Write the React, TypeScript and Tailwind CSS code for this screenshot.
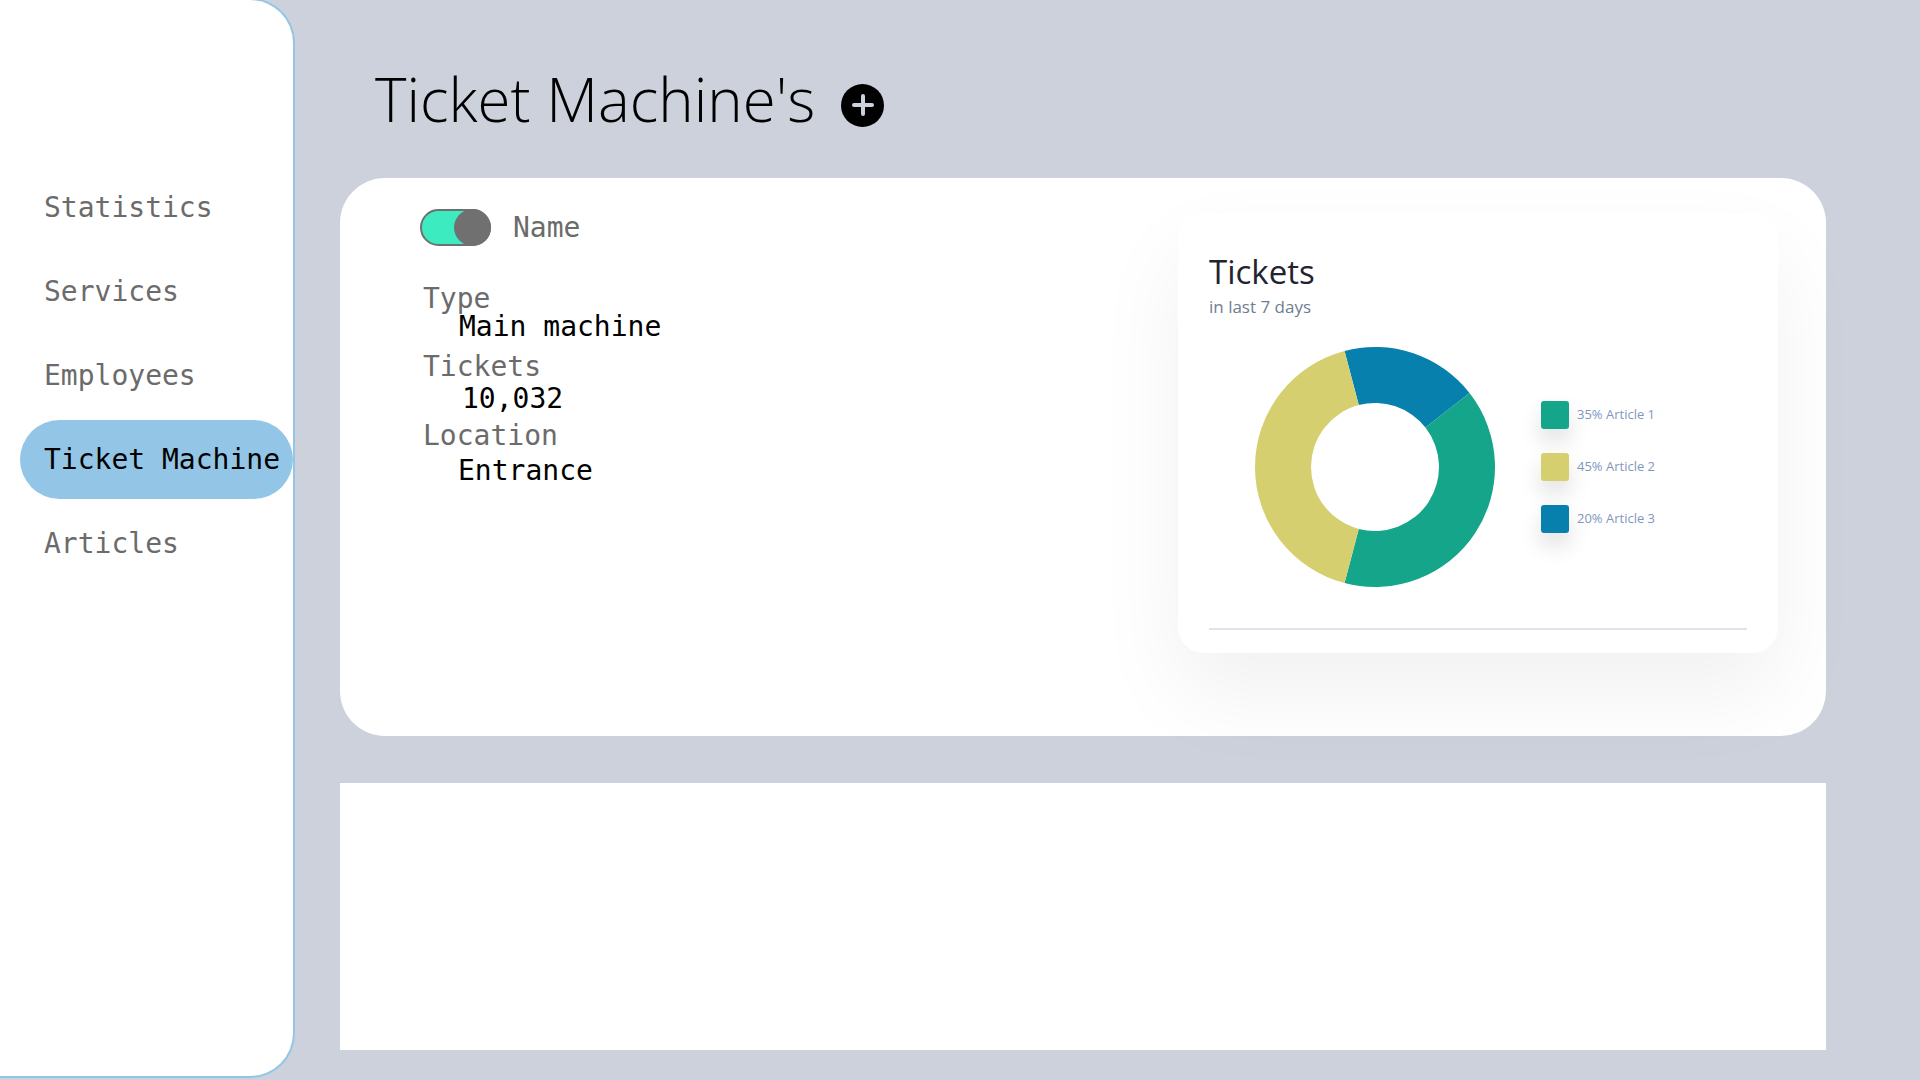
import React from "react";

const mono = { fontFamily: '"DejaVu Sans Mono", "Liberation Mono", monospace' };

function arcPath(cx: number, cy: number, R: number, r: number, a0: number, a1: number) {
  const rad = (a: number) => ((a - 90) * Math.PI) / 180;
  const p = (rr: number, a: number) => [cx + rr * Math.cos(rad(a)), cy + rr * Math.sin(rad(a))];
  const large = a1 - a0 > 180 ? 1 : 0;
  const [x0, y0] = p(R, a0);
  const [x1, y1] = p(R, a1);
  const [x2, y2] = p(r, a1);
  const [x3, y3] = p(r, a0);
  return `M ${x0} ${y0} A ${R} ${R} 0 ${large} 1 ${x1} ${y1} L ${x2} ${y2} A ${r} ${r} 0 ${large} 0 ${x3} ${y3} Z`;
}

function Donut() {
  const segs = [
    { a0: -14.7, a1: 52, c: "#0880ae" },
    { a0: 52, a1: 194.7, c: "#15a58a" },
    { a0: 194.7, a1: 345.3, c: "#d5cf6f" },
  ];
  return (
    <svg width="242" height="242" viewBox="0 0 242 242">
      {segs.map((s, i) => (
        <path key={i} d={arcPath(121, 121, 120, 64, s.a0, s.a1)} fill={s.c} />
      ))}
    </svg>
  );
}

const navItems = ["Statistics", "Services", "Employees", "Ticket Machine", "Articles"];

export default function App() {
  return (
    <div className="flex h-[1080px] w-[1920px] overflow-hidden bg-[#cdd1dc]">
      {/* Sidebar */}
      <aside className="-mt-[2px] h-[1080px] w-[295px] shrink-0 rounded-r-[45px] border-2 border-l-0 border-[#93c6e6] bg-white">
        <nav className="mt-[168px] flex flex-col gap-[5px]" style={mono}>
          {navItems.map((n) => (
            <div
              key={n}
              className={
                n === "Ticket Machine"
                  ? "ml-[20px] flex h-[79px] w-[273px] items-center rounded-full bg-[#93c6e6] pl-[24px] text-[28px] text-black"
                  : "ml-[20px] flex h-[79px] w-[273px] items-center pl-[24px] text-[28px] text-[#6b6b6b]"
              }
            >
              {n}
            </div>
          ))}
        </nav>
      </aside>

      {/* Main */}
      <main className="flex flex-col pl-[45px]">
        <header className="flex h-[178px] items-start pl-[35px] pt-[69px]">
          <div className="flex items-center">
            <h1
              className="text-[60px] font-light leading-none text-black"
              style={{ fontFamily: '"Open Sans", "Noto Sans", sans-serif' }}
            >
              Ticket Machine's
            </h1>
            <div className="ml-[26px] mt-[12px] flex h-[43px] w-[43px] items-center justify-center rounded-full bg-black">
              <svg width="22" height="22" viewBox="0 0 22 22">
                <path d="M11 2 V20 M2 11 H20" stroke="#cdd1dc" strokeWidth="4" strokeLinecap="round" />
              </svg>
            </div>
          </div>
        </header>

        {/* Card 1 */}
        <section className="flex h-[558px] w-[1486px] justify-between rounded-[45px] bg-white">
          <div className="pl-[80px] pt-[31px]" style={mono}>
            <div className="flex items-center">
              <div className="relative h-[37px] w-[71px] rounded-full border-2 border-[#707070] bg-[#3debc0]">
                <div className="absolute -right-[2px] -top-[2px] h-[37px] w-[37px] rounded-full bg-[#707070]" />
              </div>
              <span className="ml-[22px] text-[28px] leading-[28px] text-[#6b6b6b]">Name</span>
            </div>
            <div className="ml-[3px] mt-[39px] text-[28px] leading-[28px]">
              <div className="text-[#6b6b6b]">Type</div>
              <div className="pl-[36px] text-black">Main machine</div>
              <div className="mt-[12px] text-[#6b6b6b]">Tickets</div>
              <div className="mt-[4px] pl-[39px] text-black">10,032</div>
              <div className="mt-[9px] text-[#6b6b6b]">Location</div>
              <div className="mt-[7px] pl-[35px] text-black">Entrance</div>
            </div>
          </div>

          <div className="mr-[48px] mt-[35px] h-[440px]">
            <div
              className="relative z-10 flex h-[440px] w-[600px] flex-col rounded-[26px] bg-white px-[31px] pt-[42px] shadow-[0_40px_90px_rgba(0,0,0,0.06)]"
              style={{ fontFamily: '"Open Sans", "Noto Sans", sans-serif' }}
            >
              <div className="text-[33px] leading-none text-[#23232f]">Tickets</div>
              <div className="mt-[10px] text-[17px] leading-none text-[#6e7d92]">in last 7 days</div>
              <div className="ml-[45px] mt-[31px] flex items-center gap-[45px]">
                <Donut />
                <div className="flex flex-col gap-[24px]">
                  {[
                    { c: "bg-[#15a58a]", t: "35% Article 1" },
                    { c: "bg-[#d5cf6f]", t: "45% Article 2" },
                    { c: "bg-[#0880ae]", t: "20% Article 3" },
                  ].map((l) => (
                    <div key={l.t} className="flex items-center">
                      <div className={`h-[28px] w-[28px] rounded-[3px] ${l.c} shadow-[0_12px_22px_rgba(0,0,0,0.13)]`} />
                      <span className="ml-[8px] text-[13px] text-[#7f97bd]">{l.t}</span>
                    </div>
                  ))}
                </div>
              </div>
              <div className="mt-[40px] h-[2px] w-full bg-[#dfe4ec]" />
            </div>
          </div>
        </section>

        {/* Card 2 */}
        <section className="mt-[47px] h-[267px] w-[1486px] bg-white" />
      </main>
    </div>
  );
}
